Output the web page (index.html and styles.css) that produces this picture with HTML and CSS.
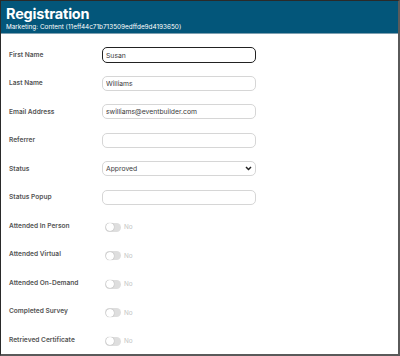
FILE: index.html
```html
<!DOCTYPE html>
<html lang="en">
<head>
    <meta charset="UTF-8">
    <meta name="viewport" content="width=device-width, initial-scale=1.0">
    <title>Registration</title>
    <link rel="stylesheet" href="styles.css">
</head>
<body>
    <div class="frame">
        <div class="header">
            <h1>Registration</h1>
            <p class="sub">Marketing: Content (11eff44c71b713509edffde9d4193650)</p>
        </div>

        <form class="form">
            <div class="row">
                <label>First Name</label>
                <input type="text" class="field focused" value="Susan">
            </div>
            <div class="row">
                <label>Last Name</label>
                <input type="text" class="field" value="Williams">
            </div>
            <div class="row">
                <label>Email Address</label>
                <input type="text" class="field" value="swilliams@eventbuilder.com">
            </div>
            <div class="row">
                <label>Referrer</label>
                <input type="text" class="field" value="">
            </div>
            <div class="row">
                <label>Status</label>
                <div class="field select">
                    <span>Approved</span>
                    <svg width="7" height="5" viewBox="0 0 7 5"><path d="M1 1 L3.5 3.5 L6 1" fill="none" stroke="#222" stroke-width="1.5"/></svg>
                </div>
            </div>
            <div class="row">
                <label>Status Popup</label>
                <input type="text" class="field" value="">
            </div>
            <div class="row">
                <label>Attended In Person</label>
                <div class="switch"><span class="track"><span class="knob"></span></span>No</div>
            </div>
            <div class="row">
                <label>Attended Virtual</label>
                <div class="switch"><span class="track"><span class="knob"></span></span>No</div>
            </div>
            <div class="row">
                <label>Attended On-Demand</label>
                <div class="switch"><span class="track"><span class="knob"></span></span>No</div>
            </div>
            <div class="row">
                <label>Completed Survey</label>
                <div class="switch"><span class="track"><span class="knob"></span></span>No</div>
            </div>
            <div class="row">
                <label>Retrieved Certificate</label>
                <div class="switch"><span class="track"><span class="knob"></span></span>No</div>
            </div>
        </form>
    </div>
</body>
</html>
```

FILE: styles.css
```css
* {
    margin: 0;
    padding: 0;
    box-sizing: border-box;
}

body {
    font-family: 'Inter', 'Liberation Sans', sans-serif;
    background-color: #fff;
    color: #333;
}

/* Moldura */
.frame {
    width: 400px;
    height: 356px;
    border-top: 1px solid #2a2a2a;
    border-left: 1px solid #2a2a2a;
    border-right: 2px solid #5a5a5a;
    border-bottom: 2px solid #5a5a5a;
    overflow: hidden;
}

.header {
    background-color: #03567a;
    color: white;
    height: 33px;
    padding: 5px 5px 0;
    border-bottom: 1px solid #7d9fb0;
}

h1 {
    font-size: 14.5px;
    font-weight: 700;
    line-height: 15px;
    letter-spacing: -0.2px;
}

.sub {
    font-size: 6.4px;
    line-height: 9px;
    margin-top: 2px;
}

/* Formulario */
.form {
    padding: 13px 0 0 8px;
}

.row {
    display: flex;
    align-items: flex-start;
    height: 28.5px;
}

label {
    width: 93px;
    font-size: 6.6px;
    font-weight: 600;
    color: #555;
    line-height: 10px;
    padding-top: 2.5px;
}

.field {
    width: 154px;
    height: 15px;
    border: 1px solid #d6d6d6;
    border-radius: 5px;
    padding: 0 3px;
    font-family: inherit;
    font-size: 6.8px;
    color: #3a3a3a;
    outline: none;
}

.field.focused {
    border: 1.5px solid #222;
    height: 16px;
}

.select {
    display: flex;
    align-items: center;
    justify-content: space-between;
    padding-right: 3px;
}

.switch {
    display: flex;
    align-items: center;
    gap: 3px;
    margin-left: 3px;
    height: 18px;
    font-size: 6.4px;
    color: #c4c4c4;
}

.track {
    width: 16px;
    height: 9px;
    border-radius: 5px;
    background-color: #dedede;
    display: flex;
    align-items: center;
    padding-left: 1px;
}

.knob {
    width: 8px;
    height: 8px;
    border-radius: 50%;
    background-color: white;
    box-shadow: 0 0 1px rgba(0, 0, 0, 0.4);
}
```
